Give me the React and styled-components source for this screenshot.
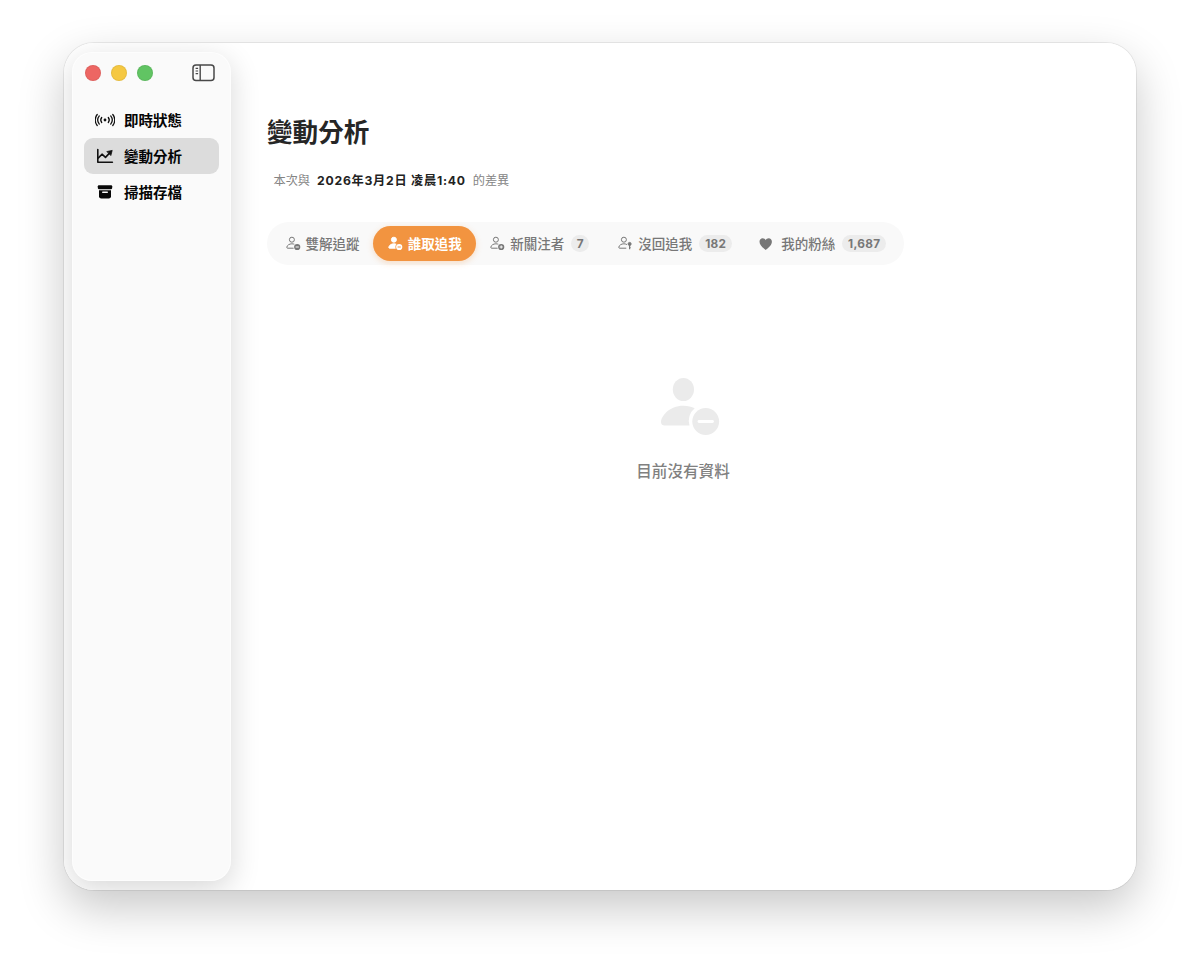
import React from "react";
import styled, { createGlobalStyle } from "styled-components";

const GlobalStyle = createGlobalStyle`
  * {
    box-sizing: border-box;
  }
  body {
    margin: 0;
    background: #fff;
    font-family: Inter, "Noto Sans CJK TC", sans-serif;
  }
`;

const Desktop = styled.div`
  height: 974px;
  padding: 43px 64px 84px;
  overflow: hidden;
`;

const Window = styled.div`
  display: flex;
  height: 847px;
  padding: 9px 8px;
  border-radius: 30px;
  background: #fff;
  overflow: hidden;
`;

const WindowShadow = styled.div`
  border-radius: 30px;
  box-shadow: 0 0 0 1px rgba(0, 0, 0, 0.07), 0 18px 46px rgba(0, 0, 0, 0.22);
`;

const Sidebar = styled.aside`
  width: 159px;
  height: 829px;
  flex: none;
  padding: 11px 12px 0;
  border-radius: 20px;
  background: #fafafa;
  box-shadow: inset 0 0 0 1px rgba(255, 255, 255, 0.6), 0 8px 30px rgba(0, 0, 0, 0.16);
`;

const TitleBar = styled.div`
  display: flex;
  align-items: center;
  height: 19px;
  gap: 10px;
  padding-left: 1px;
  svg {
    margin-left: auto;
    margin-right: 4px;
  }
`;

const Light = styled.span`
  width: 16px;
  height: 16px;
  border-radius: 50%;
  background: ${props => props.color};
  border: 1px solid rgba(0, 0, 0, 0.06);
`;

const Menu = styled.nav`
  padding-top: 20px;
`;

const MenuItem = styled.a`
  display: flex;
  align-items: center;
  height: 36px;
  padding-left: 11px;
  padding-bottom: 1px;
  gap: 9px;
  border-radius: 9px;
  font-size: 14.5px;
  font-weight: 600;
  color: #050505;
  background: ${props => (props.$active ? "#dcdcdc" : "transparent")};
  svg {
    margin-top: 1px;
  }
`;

const Content = styled.main`
  flex: 1;
  padding: 62px 28px 0 36px;
`;

const Title = styled.h1`
  margin: 0;
  font-size: 25.6px;
  line-height: 38px;
  font-weight: 700;
  color: #262626;
`;

const Subtitle = styled.p`
  display: flex;
  margin: 20px 0 0;
  padding-left: 6.5px;
  gap: 7px;
  font-size: 12.2px;
  line-height: 18px;
  color: #848484;
  white-space: nowrap;
  strong {
    font-weight: 700;
    letter-spacing: 0.75px;
    color: #222;
  }
`;

const Tabs = styled.div`
  display: flex;
  align-items: center;
  width: 637px;
  height: 43px;
  margin-top: 32px;
  padding: 4px;
  border-radius: 22px;
  background: #f9f9f9;
`;

const Tab = styled.button`
  display: flex;
  align-items: center;
  flex: none;
  width: ${props => props.$width}px;
  height: 35px;
  padding: 0 0 1px 14.5px;
  border: 0;
  border-radius: 18px;
  font-family: inherit;
  font-size: 13.5px;
  font-weight: ${props => (props.$active ? 700 : 500)};
  color: ${props => (props.$active ? "#fff" : "#777")};
  background: ${props => (props.$active ? "#f29440" : "transparent")};
  box-shadow: ${props => (props.$active ? "0 2px 6px rgba(242, 148, 64, 0.28)" : "none")};
  white-space: nowrap;
  svg {
    flex: none;
    margin-top: 1px;
    margin-right: ${props => props.$iconGap || 5}px;
  }
`;

const Badge = styled.span`
  display: flex;
  align-items: center;
  justify-content: center;
  width: ${props => props.$width}px;
  height: 17px;
  margin-left: 7px;
  margin-top: 1px;
  border-radius: 9px;
  background: #ececec;
  font-size: 11.8px;
  font-weight: 700;
  letter-spacing: 0.3px;
  color: #777;
`;

const Empty = styled.div`
  display: flex;
  flex-direction: column;
  align-items: center;
  width: 832px;
  padding-top: 111px;
  font-size: 15.6px;
  line-height: 24px;
  font-weight: 500;
  color: #808080;
  svg {
    margin-left: 13px;
    margin-bottom: 24px;
  }
`;

const ToggleIcon = () => (
  <svg width="23" height="18" viewBox="0 0 23 18" fill="none" stroke="#484848">
    <rect x="1" y="1" width="21" height="15.6" rx="3" strokeWidth="1.5" />
    <path d="M8.2 1v15.6" strokeWidth="1.4" />
    <path d="M3.6 4.4h2.5M3.6 7h2.5M3.6 9.6h2.5" strokeWidth="1.1" />
  </svg>
);

const LiveIcon = () => (
  <svg width="20" height="16" viewBox="0 0 20 16" fill="none" stroke="#111" strokeWidth="1.3" strokeLinecap="round">
    <circle cx="10" cy="8" r="1.4" fill="#111" stroke="none" />
    <path d="M6.7 5.5a4 4 0 0 0 0 5M13.3 5.5a4 4 0 0 1 0 5" />
    <path d="M4.300 3.900a6.600 6.600 0 0 0 0 8.200M15.700 3.900a6.600 6.600 0 0 1 0 8.200" />
    <path d="M2.200 2.500a8.600 8.600 0 0 0 0 11M17.800 2.500a8.600 8.600 0 0 1 0 11" />
  </svg>
);

const ChartIcon = () => (
  <svg width="20" height="16" viewBox="0 0 20 16" fill="none" stroke="#111" strokeWidth="1.6" strokeLinecap="round" strokeLinejoin="round">
    <path d="M2.8 1.6v12.6h14.6" />
    <path d="M3.4 9.9l3.6-3.7 3.5 3.2 4.2-4.5" />
    <path d="M12.2 3.5l5-1.1-1.3 4.8z" fill="#111" strokeWidth=".8" />
  </svg>
);

const ArchiveIcon = () => (
  <svg width="20" height="16" viewBox="0 0 20 16" fill="#080808">
    <rect x="2.8" y="1.2" width="14.4" height="4" rx="1.1" />
    <path d="M4 6.2h12v6.1a2.3 2.3 0 0 1-2.3 2.3H6.3a2.3 2.3 0 0 1-2.3-2.3z" />
    <rect x="7" y="7.5" width="6" height="1.5" rx=".75" fill="#fafafa" />
  </svg>
);

const PersonIcon = ({ filled, mark, cut }) => (
  <svg width="15" height="15" viewBox="0 0 15 15" fill="none" stroke="currentColor" strokeWidth="1">
    <circle cx="5.9" cy="3.7" r="2.5" fill={filled ? "currentColor" : "none"} />
    <path
      d="M7.9 12.2H1.6c-.6 0-.9-.4-.8-1 .4-2 2.5-3.4 5.1-3.4 1 0 1.9.2 2.7.6"
      fill={filled ? "currentColor" : "none"}
      strokeLinecap="round"
    />
    {mark === "key" ? (
      <g>
        <circle cx="11.6" cy="7.9" r="1.5" fill="currentColor" />
        <path d="M11.6 9v4.2M11.6 11.7h1" strokeWidth="1.2" />
      </g>
    ) : (
      <g>
        <circle cx="11.2" cy="11" r="3.8" fill={cut} stroke="none" />
        <circle cx="11.2" cy="11" r="3.1" fill="currentColor" stroke="none" />
        <path d={mark === "plus" ? "M9.6 11h3.2M11.2 9.4v3.2" : "M9.6 11h3.2"} stroke={cut} />
      </g>
    )}
  </svg>
);

const HeartIcon = () => (
  <svg width="14" height="14" viewBox="0 0 14 14" fill="currentColor">
    <path d="M6.7 12.9C4.5 11.4.5 8.3.5 4.8c0-2 1.4-3.5 3.2-3.5 1.3 0 2.4.7 3 1.900.6-1.200 1.700-1.900 3-1.900 1.800 0 3.200 1.500 3.200 3.500 0 3.500-4 6.600-6.200 8.100z" />
  </svg>
);

const EmptyIcon = () => (
  <svg width="60" height="60" viewBox="0 0 60 60" fill="#ebebeb">
    <ellipse cx="23.4" cy="13.5" rx="10.6" ry="11.5" />
    <path d="M4.5 49.5c-2 0-3.5-1.3-3.5-3.3C1 40.5 9 29.7 23.4 29.7c4.6 0 8.3 1 11.3 2.6a16 16 0 0 0-5.2 17.2z" />
    <circle cx="45.7" cy="45.5" r="13.4" />
    <path d="M39 45.5h13.5" stroke="#fff" strokeWidth="2.8" strokeLinecap="round" />
  </svg>
);

const menu = [
  { label: "即時狀態", icon: <LiveIcon /> },
  { label: "變動分析", icon: <ChartIcon />, active: true },
  { label: "掃描存檔", icon: <ArchiveIcon /> },
];

const tabs = [
  { label: "雙解追蹤", width: 102.3, icon: <PersonIcon mark="minus" cut="#f9f9f9" /> },
  { label: "誰取追我", width: 102.5, icon: <PersonIcon filled mark="minus" cut="#f29440" />, active: true },
  { label: "新關注者", width: 128, icon: <PersonIcon mark="plus" cut="#f9f9f9" />, count: "7", badge: 18 },
  { label: "沒回追我", width: 141, icon: <PersonIcon mark="key" />, count: "182", badge: 33 },
  { label: "我的粉絲", width: 154, icon: <HeartIcon />, iconGap: 8, count: "1,687", badge: 44 },
];

export default function App() {
  return (
    <Desktop>
      <GlobalStyle />
      <WindowShadow>
        <Window>
          <Sidebar>
            <TitleBar>
              <Light color="#ed6663" />
              <Light color="#f5c842" />
              <Light color="#61c463" />
              <ToggleIcon />
            </TitleBar>
            <Menu>
              {menu.map(item => (
                <MenuItem key={item.label} $active={item.active}>
                  {item.icon}
                  {item.label}
                </MenuItem>
              ))}
            </Menu>
          </Sidebar>
          <Content>
            <Title>變動分析</Title>
            <Subtitle>
              <span>本次與</span>
              <strong>2026年3月2日 凌晨1:40</strong>
              <span>的差異</span>
            </Subtitle>
            <Tabs>
              {tabs.map(tab => (
                <Tab key={tab.label} $active={tab.active} $width={tab.width} $iconGap={tab.iconGap}>
                  {tab.icon}
                  {tab.label}
                  {tab.count && <Badge $width={tab.badge}>{tab.count}</Badge>}
                </Tab>
              ))}
            </Tabs>
            <Empty>
              <EmptyIcon />
              目前沒有資料
            </Empty>
          </Content>
        </Window>
      </WindowShadow>
    </Desktop>
  );
}
